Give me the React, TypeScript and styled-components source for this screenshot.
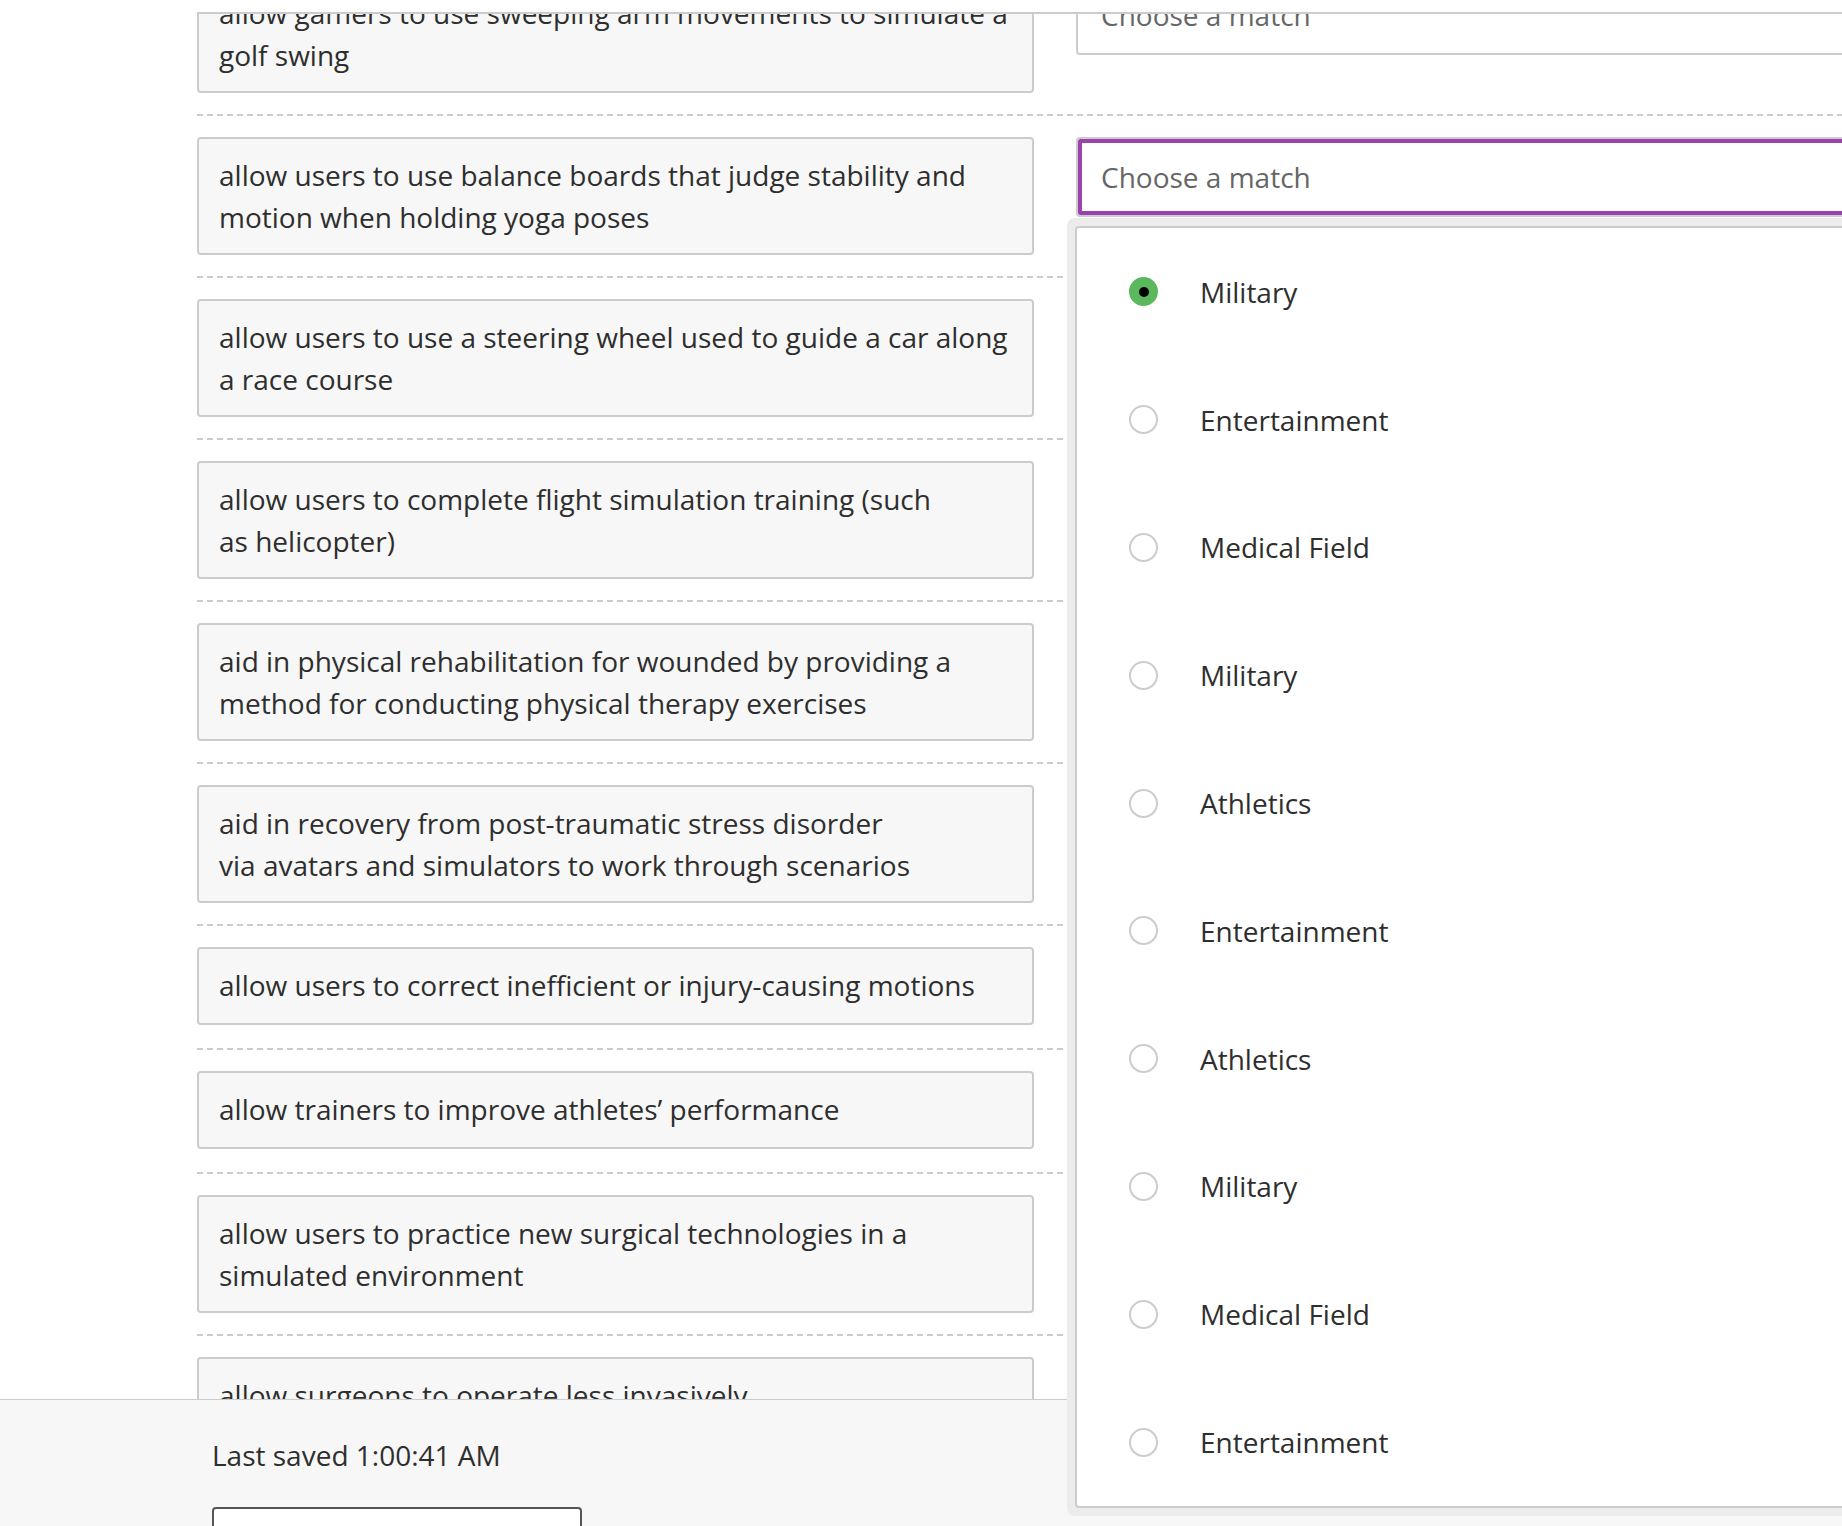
import React from "react";
import styled, { createGlobalStyle } from "styled-components";

const GlobalStyle = createGlobalStyle`
  html, body { margin: 0; padding: 0; background: #ffffff; }
  body { font-family: "Open Sans", "Liberation Sans", sans-serif; }
  * { box-sizing: border-box; }
`;

const Page = styled.div`
  position: relative;
  width: 1842px;
  height: 1526px;
  overflow: hidden;
  display: flex;
  flex-direction: column;
  padding-top: 12px;
  background: #ffffff;
  color: #333333;
  font-family: "Open Sans", "Liberation Sans", sans-serif;
  font-size: 28px;
  line-height: 42px;
`;

const Main = styled.main`
  flex: 1 1 auto;
  min-height: 0;
  padding-left: 197px;
  display: flex;
`;

const ScrollArea = styled.div`
  flex: 1;
  min-width: 0;
  overflow: hidden;
  border-top: 2px solid #cccccc;
`;

const List = styled.div`
  margin-top: -60px;
  display: flex;
  flex-direction: column;
`;

const Row = styled.div`
  display: grid;
  grid-template-columns: 837px 900px;
  column-gap: 42px;
  align-items: start;
  padding: 21px 0 23px;
  background-image: repeating-linear-gradient(
    to right,
    #cccccc 0,
    #cccccc 6px,
    transparent 6px,
    transparent 10px
  );
  background-repeat: no-repeat;
  background-position: left bottom;
  background-size: 100% 2px;
`;

const Prompt = styled.div`
  min-height: 78px;
  background: #f7f7f7;
  border: 2px solid #cccccc;
  border-radius: 4px;
  padding: 15px 16px 15px 20px;
  color: #2e2e2e;
  white-space: nowrap;
`;

const Select = styled.div<{ $focused?: boolean }>`
  height: 80px;
  display: flex;
  align-items: center;
  padding-left: 23px;
  background: #ffffff;
  border: 2px solid #cccccc;
  border-radius: 4px;
  color: #666666;
  box-shadow: ${(p) => (p.$focused ? "inset 0 0 0 4px #9b43ad" : "none")};
`;

const Footer = styled.footer`
  flex: 0 0 127px;
  min-height: 0;
  overflow: hidden;
  background: #f7f7f7;
  border-top: 1px solid #cccccc;
  padding: 34px 0 0 212px;
  display: flex;
  flex-direction: column;
  gap: 31px;
`;

const SavedText = styled.div`
  color: #2e2e2e;
`;

const SaveButton = styled.div`
  flex: 0 0 60px;
  width: 370px;
  background: #ffffff;
  border: 2px solid #555555;
  border-radius: 4px;
`;

const Dropdown = styled.div`
  position: absolute;
  left: 1067px;
  top: 218px;
  width: 860px;
  padding: 8px;
  background: #ececec;
  border-radius: 8px;
`;

const OptionPanel = styled.ul`
  list-style: none;
  margin: 0;
  padding: 0;
  background: #ffffff;
  border: 2px solid #cccccc;
  border-radius: 4px;
`;

const Option = styled.li`
  height: 127.8px;
  display: flex;
  align-items: center;
  gap: 42px;
  padding-left: 52px;
  color: #2e2e2e;
`;

const Radio = styled.span<{ $checked?: boolean }>`
  flex: 0 0 29px;
  width: 29px;
  height: 29px;
  border-radius: 50%;
  display: flex;
  align-items: center;
  justify-content: center;
  background: ${(p) => (p.$checked ? "#5cb85c" : "#ffffff")};
  border: ${(p) => (p.$checked ? "none" : "2px solid #cccccc")};
  &::after {
    content: "";
    display: ${(p) => (p.$checked ? "block" : "none")};
    width: 10px;
    height: 10px;
    border-radius: 50%;
    background: #000000;
  }
`;

const prompts: string[][] = [
  ["allow gamers to use sweeping arm movements to simulate a", "golf swing"],
  ["allow users to use balance boards that judge stability and", "motion when holding yoga poses"],
  ["allow users to use a steering wheel used to guide a car along", "a race course"],
  ["allow users to complete flight simulation training (such", "as helicopter)"],
  ["aid in physical rehabilitation for wounded by providing a", "method for conducting physical therapy exercises"],
  ["aid in recovery from post-traumatic stress disorder", "via avatars and simulators to work through scenarios"],
  ["allow users to correct inefficient or injury-causing motions"],
  ["allow trainers to improve athletes\u2019 performance"],
  ["allow users to practice new surgical technologies in a", "simulated environment"],
  ["allow surgeons to operate less invasively"],
];

const options = [
  "Military",
  "Entertainment",
  "Medical Field",
  "Military",
  "Athletics",
  "Entertainment",
  "Athletics",
  "Military",
  "Medical Field",
  "Entertainment",
];

export default function App() {
  return (
    <>
      <GlobalStyle />
      <Page>
        <Main>
          <ScrollArea>
            <List>
              {prompts.map((lines, i) => (
                <Row key={i}>
                  <Prompt>
                    {lines.map((l, j) => (
                      <React.Fragment key={j}>
                        {j > 0 && <br />}
                        {l}
                      </React.Fragment>
                    ))}
                  </Prompt>
                  <Select $focused={i === 1}>Choose a match</Select>
                </Row>
              ))}
            </List>
          </ScrollArea>
        </Main>
        <Footer>
          <SavedText>Last saved 1:00:41 AM</SavedText>
          <SaveButton />
        </Footer>
        <Dropdown>
          <OptionPanel>
            {options.map((o, i) => (
              <Option key={i}>
                <Radio $checked={i === 0} />
                {o}
              </Option>
            ))}
          </OptionPanel>
        </Dropdown>
      </Page>
    </>
  );
}
